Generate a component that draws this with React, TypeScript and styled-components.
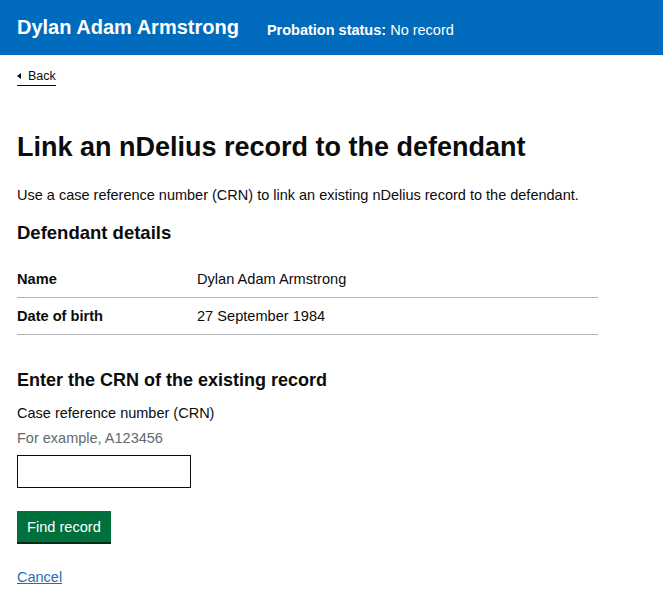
import styled, { createGlobalStyle } from "styled-components";

const GlobalStyle = createGlobalStyle`
body {
  margin: 0;
  font-family: "Liberation Sans", Arial, sans-serif;
  color: #0b0c0c;
  background: #ffffff;
}
`;

const Header = styled.header`
height: 55px;
background: #006bbd;
color: #ffffff;
display: flex;
align-items: center;
padding: 0 17px;
`;

const HeaderName = styled.span`
font-size: 20px;
font-weight: 700;
`;

const HeaderStatus = styled.span`
font-size: 14.5px;
margin-left: 28px;
margin-top: 5px;
`;

const Main = styled.main`
padding: 0 17px;
`;

const BackLink = styled.a`
display: inline-flex;
align-items: center;
gap: 7px;
margin-top: 13px;
font-size: 12.5px;
line-height: 16px;
color: #0b0c0c;
text-decoration: none;
border-bottom: 1px solid #0b0c0c;
padding-bottom: 1px;
`;

const Arrow = styled.span`
width: 0;
height: 0;
border-top: 3.5px solid transparent;
border-bottom: 3.5px solid transparent;
border-right: 4px solid #0b0c0c;
`;

const Title = styled.h1`
margin: 44px 0 0;
font-size: 27px;
line-height: 34px;
font-weight: 700;
`;

const Lead = styled.p`
margin: 21px 0 0;
font-size: 14.5px;
line-height: 20px;
`;

const SubHeading = styled.h2<{ $top: number; $size: number }>`
margin: ${props => props.$top}px 0 0;
font-size: ${props => props.$size}px;
line-height: 24px;
font-weight: 700;
`;

const Summary = styled.dl`
margin: 17px 0 0;
width: 581px;
`;

const SummaryRow = styled.div`
display: flex;
border-bottom: 1px solid #b1b4b6;
padding: 8px 0 9px;
font-size: 14.6px;
line-height: 18px;
& + & {
  padding-top: 9px;
}
`;

const Key = styled.dt`
width: 180px;
font-weight: 700;
`;

const Value = styled.dd`
margin: 0;
`;

const Label = styled.label`
display: block;
margin-top: 11px;
font-size: 14.5px;
line-height: 20px;
`;

const Hint = styled.div`
margin-top: 5px;
font-size: 14.5px;
line-height: 20px;
color: #626a6e;
`;

const Input = styled.input`
display: block;
box-sizing: border-box;
margin-top: 7px;
width: 174px;
height: 33px;
border: 1px solid #0b0c0c;
font: inherit;
padding: 4px;
`;

const Button = styled.button`
display: block;
margin-top: 23px;
background: #00703c;
color: #ffffff;
border: none;
box-shadow: 0 2px 0 #002d18;
font-family: inherit;
font-size: 14.6px;
line-height: 19px;
padding: 7px 10px 5px;
cursor: pointer;
`;

const CancelLink = styled.a`
display: inline-block;
margin-top: 25px;
font-size: 14.5px;
line-height: 20px;
color: #1d70b8;
text-decoration: underline;
`;

export default function App() {
  return (
    <>
      <GlobalStyle />
      <Header>
        <HeaderName>Dylan Adam Armstrong</HeaderName>
        <HeaderStatus>
          <b>Probation status:</b> No record
        </HeaderStatus>
      </Header>
      <Main>
        <BackLink href="#">
          <Arrow />
          Back
        </BackLink>
        <Title>Link an nDelius record to the defendant</Title>
        <Lead>
          Use a case reference number (CRN) to link an existing nDelius record to the defendant.
        </Lead>
        <SubHeading $top={16} $size={18.5}>Defendant details</SubHeading>
        <Summary>
          <SummaryRow>
            <Key>Name</Key>
            <Value>Dylan Adam Armstrong</Value>
          </SummaryRow>
          <SummaryRow>
            <Key>Date of birth</Key>
            <Value>27 September 1984</Value>
          </SummaryRow>
        </Summary>
        <SubHeading $top={33} $size={18}>Enter the CRN of the existing record</SubHeading>
        <Label htmlFor="crn">Case reference number (CRN)</Label>
        <Hint>For example, A123456</Hint>
        <Input id="crn" type="text" />
        <Button>Find record</Button>
        <CancelLink href="#">Cancel</CancelLink>
      </Main>
    </>
  );
}
